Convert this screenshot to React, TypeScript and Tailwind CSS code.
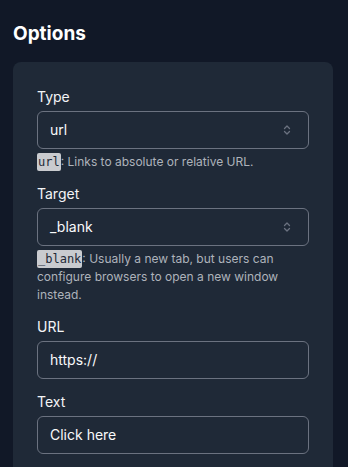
import React from "react";

function Chevrons() {
  return (
    <svg width="8" height="12" viewBox="0 0 8 12" fill="none" className="shrink-0">
      <path d="M1.5 4.5 L4 2 L6.5 4.5" stroke="#6b7280" strokeWidth="1.3" strokeLinecap="round" strokeLinejoin="round" />
      <path d="M1.5 7.5 L4 10 L6.5 7.5" stroke="#6b7280" strokeWidth="1.3" strokeLinecap="round" strokeLinejoin="round" />
    </svg>
  );
}

function Code({ children }: { children: React.ReactNode }) {
  return (
    <code className="bg-[#c9cbcf] text-[#1f2937] rounded-[2px] px-[1px] py-[2px] text-[12px] font-['DejaVu_Sans_Mono',monospace]">
      {children}
    </code>
  );
}

function Label({ children }: { children: React.ReactNode }) {
  return <div className="text-[14px] leading-5 text-[#f3f4f6] mb-1">{children}</div>;
}

function SelectBox({ value }: { value: string }) {
  return (
    <div className="h-[38px] border border-[#6b7280] rounded-md flex items-center justify-between pl-3 pr-[17px]">
      <span className="text-[14px] leading-5 text-[#f9fafb]">{value}</span>
      <Chevrons />
    </div>
  );
}

function InputBox({ value }: { value: string }) {
  return (
    <div className="h-[38px] border border-[#6b7280] rounded-md flex items-center pl-3">
      <span className="text-[14px] leading-5 text-[#f9fafb]">{value}</span>
    </div>
  );
}

function Help({ children }: { children: React.ReactNode }) {
  return <div className="mt-1 text-[12px] leading-[18px] text-[#aeb3bb]">{children}</div>;
}

export default function App() {
  return (
    <div className="w-[348px] h-[467px] overflow-hidden bg-[#111827] pt-5 px-[13px] font-['Inter',sans-serif]">
      <h1 className="text-[19px] leading-7 font-bold text-white mb-[14px]">Options</h1>
      <div className="w-[320px] bg-[#1f2937] rounded-lg px-6 pt-[25px] pb-6 flex flex-col gap-[13px]">
        <div>
          <Label>Type</Label>
          <SelectBox value="url" />
          <Help>
            <Code>url</Code>: Links to absolute or relative URL.
          </Help>
        </div>
        <div>
          <Label>Target</Label>
          <SelectBox value="_blank" />
          <Help>
            <Code>_blank</Code>: Usually a new tab, but users can configure browsers to open a new window instead.
          </Help>
        </div>
        <div>
          <Label>URL</Label>
          <InputBox value="https://" />
        </div>
        <div>
          <Label>Text</Label>
          <InputBox value="Click here" />
        </div>
      </div>
    </div>
  );
}
